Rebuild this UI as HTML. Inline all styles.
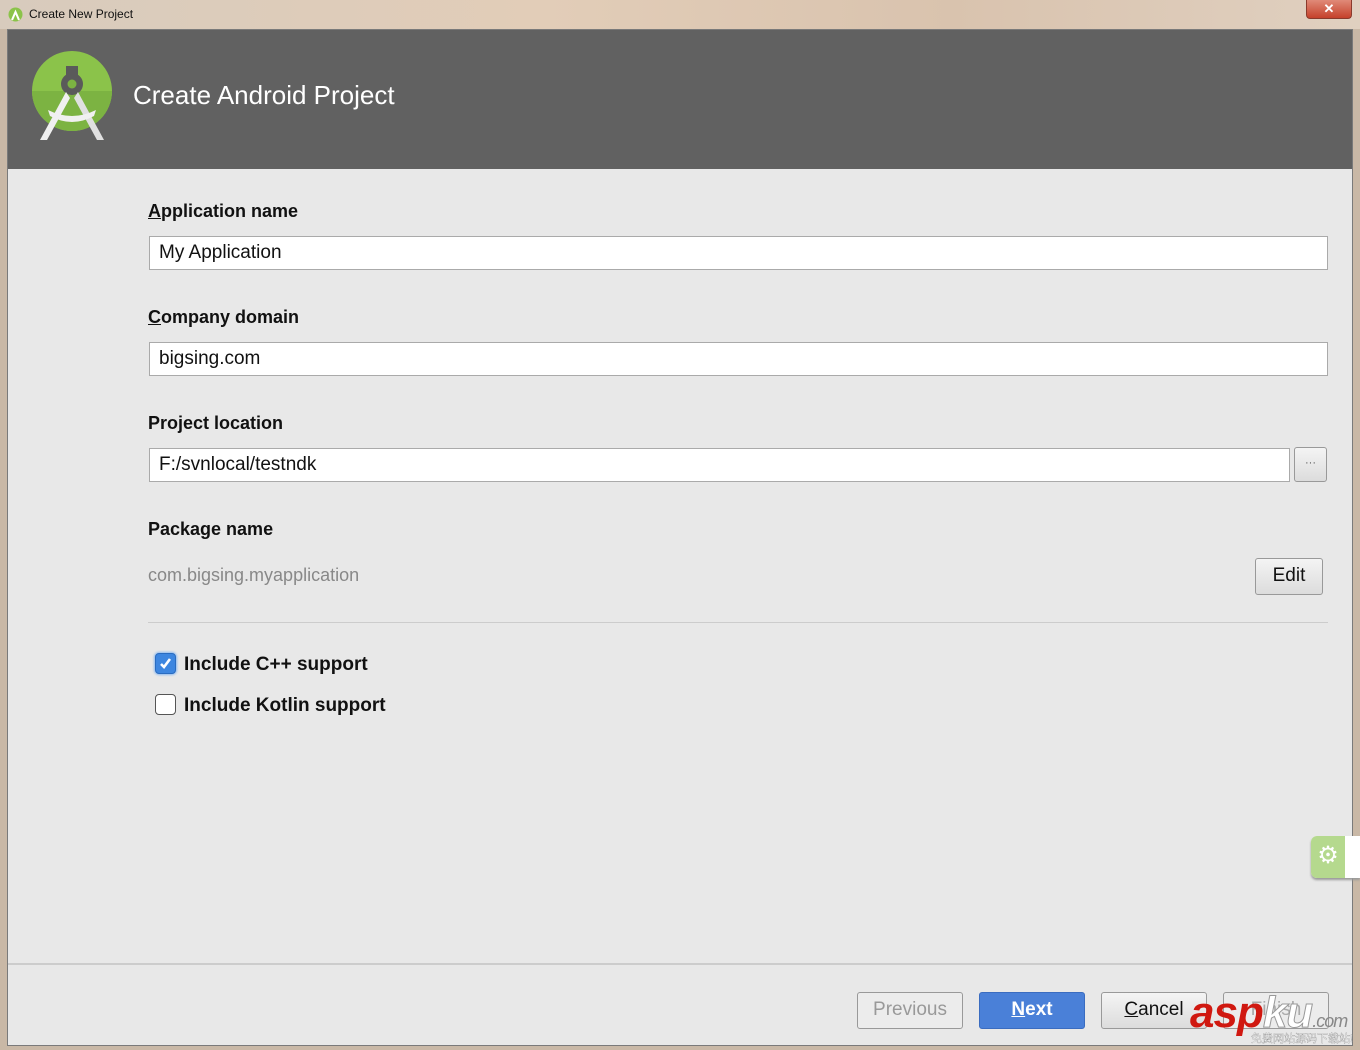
<!DOCTYPE html>
<html><head><meta charset="utf-8"><style>
*{margin:0;padding:0;box-sizing:border-box}
html,body{width:1360px;height:1050px;overflow:hidden}
body{background:#c9b8a6;font-family:"Liberation Sans","Noto Sans CJK SC",sans-serif;position:relative}
.tb{position:absolute;left:0;top:0;width:1360px;height:29px;background:linear-gradient(90deg,#d8cbbd,#e2cdb8 40%,#d9c3ae 70%,#e0d0c0)}
.tb .t{position:absolute;left:29px;top:7px;font-size:12px;color:#111}
.close{position:absolute;left:1306px;top:0;width:46px;height:19px;background:linear-gradient(#e08a78,#c5412b);border:1px solid #8a3a2c;border-top:none;border-radius:0 0 4px 4px;color:#fff;font-size:13px;text-align:center;line-height:18px;font-weight:bold}
.win{position:absolute;left:7px;top:29px;width:1346px;height:1017px;background:#e8e8e8;border:1px solid #7a7a7a}
.hdr{position:absolute;left:0;top:0;width:1344px;height:139px;background:#616161}
.hdr .h{position:absolute;left:125px;top:50px;font-size:26px;color:#fff}
.lbl{position:absolute;left:140px;font-size:18px;font-weight:bold;color:#111}
.in{position:absolute;left:141px;height:34px;background:#fff;border:1px solid #aaa;font-size:19px;padding-left:9px;line-height:31px;color:#111}
.btn{position:absolute;height:37px;border:1px solid #999;border-radius:3px;background:linear-gradient(#f4f4f4,#dcdcdc);font-size:19px;text-align:center;line-height:34px;color:#111}
.cb{position:absolute;left:147px;width:21px;height:21px;border:1px solid #555;border-radius:4px;background:#fff}
.cbl{position:absolute;left:176px;font-size:19px;font-weight:bold;color:#111}
</style></head><body>
<div class="tb"><svg style="position:absolute;left:8px;top:7px" width="15" height="15"><circle cx="7.5" cy="7.5" r="7" fill="#8bc34a"/><path d="M4 13 L7.5 5 L11 13" stroke="#fff" stroke-width="2" fill="none"/></svg><div class="t">Create New Project</div></div>
<div class="close">✕</div>
<div class="win">
<div class="hdr">
<svg style="position:absolute;left:22px;top:20px" width="84" height="92" viewBox="0 0 84 92">
<circle cx="42" cy="41" r="40" fill="#8bc34a"/>
<path d="M2 41 A40 40 0 0 0 82 41 Z" fill="#7cb342"/>
<rect x="36" y="16" width="12" height="10" fill="#5a5a5a"/>
<circle cx="42" cy="34" r="11" fill="#5a5a5a"/><circle cx="42" cy="34" r="4.5" fill="#7cb342"/>
<path d="M36 42 L10 90 L17 90 L40 48 Z" fill="#f0f0f0"/>
<path d="M48 42 L74 90 L67 90 L44 48 Z" fill="#e0e0e0"/>
<path d="M18 60 Q42 72 66 60 L64 66 Q42 78 20 66 Z" fill="#f0f0f0"/>
</svg>
<div class="h">Create Android Project</div>
</div>
<div class="lbl" style="top:171px"><u>A</u>pplication name</div>
<div class="in" style="top:206px;width:1179px">My Application</div>
<div class="lbl" style="top:277px"><u>C</u>ompany domain</div>
<div class="in" style="top:312px;width:1179px">bigsing.com</div>
<div class="lbl" style="top:383px">Project location</div>
<div class="in" style="top:418px;width:1141px">F:/svnlocal/testndk</div>
<div class="btn" style="left:1286px;top:417px;width:33px;height:35px;font-size:11px;line-height:30px;color:#555">···</div>
<div class="lbl" style="top:489px">Package name</div>
<div style="position:absolute;left:140px;top:535px;font-size:18px;color:#888">com.bigsing.myapplication</div>
<div class="btn" style="left:1247px;top:528px;width:68px">Edit</div>
<div style="position:absolute;left:140px;top:592px;width:1180px;height:1px;background:#ccc"></div>
<div class="cb" style="top:623px;background:#3d86e0;border-color:#2a6cc0;box-shadow:0 0 2px 1px #8ab8f0"><svg width="19" height="19"><path d="M5 10 L8 13 L14 5" stroke="#fff" stroke-width="2.6" fill="none"/></svg></div>
<div class="cbl" style="top:624px">Include C++ support</div>
<div class="cb" style="top:664px"></div>
<div class="cbl" style="top:665px">Include Kotlin support</div>
<div style="position:absolute;left:0;top:933px;width:1344px;height:2px;background:#ccc"></div>
<div class="btn" style="left:849px;top:962px;width:106px;color:#999;background:#ececec">Previous</div>
<div class="btn" style="left:971px;top:962px;width:106px;background:#4a80d8;border-color:#3a6cc0;color:#fff;font-weight:bold"><u>N</u>ext</div>
<div class="btn" style="left:1093px;top:962px;width:106px"><u>C</u>ancel</div>
<div class="btn" style="left:1215px;top:962px;width:106px;color:#aaa;background:#ececec">Finish</div>
<div style="position:absolute;left:1182px;top:958px;font-size:44px;font-weight:bold;font-style:italic;color:#d01810;letter-spacing:-1px;white-space:nowrap">asp<span style="color:#fff;-webkit-text-stroke:1px #999">ku</span><span style="font-size:18px;color:#888;font-weight:normal">.com</span></div>
<div style="position:absolute;left:1243px;top:1000px;font-size:11px;color:#fff;-webkit-text-stroke:.3px #888;white-space:nowrap">免费网站源码下载站!</div>
</div>
<div style="position:absolute;left:1311px;top:836px;width:49px;height:42px;background:#fff;border-radius:6px 0 0 6px;box-shadow:0 2px 2px #999"><div style="width:34px;height:42px;background:#b5d98e;border-radius:6px 0 0 6px;color:#fff;font-size:24px;text-align:center;line-height:40px">⚙</div></div>
</body></html>
